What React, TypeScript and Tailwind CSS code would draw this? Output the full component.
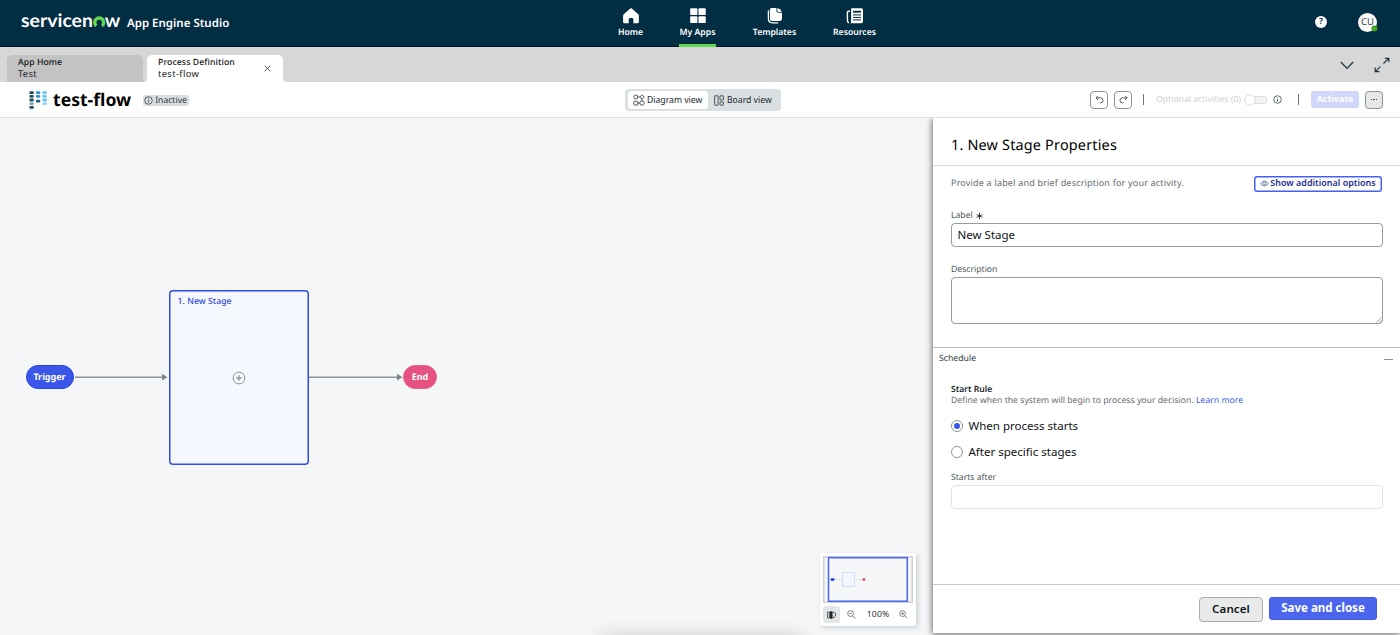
import { useState } from "react";

const NAV = [
  { id: "home", label: "Home", width: "w-[25px]" },
  { id: "apps", label: "My Apps", width: "w-[37px]" },
  { id: "templates", label: "Templates", width: "w-[45px]" },
  { id: "resources", label: "Resources", width: "w-[43px]" },
];

// Column, row and colour of every bar in the process icon
const PROCESS_DOTS: [number, number, string][] = [
  [0, 0, "#1d4a5f"],
  [0, 1, "#1d4a5f"],
  [0, 2, "#1d4a5f"],
  [0, 3, "#8fa3ad"],
  [0, 4, "#1d4a5f"],
  [1, 0, "#2f8fd8"],
  [1, 1, "#2f8fd8"],
  [1, 2.3, "#1f5c7d"],
  [2, 0, "#63c3fb"],
  [2, 1, "#63c3fb"],
  [2, 2, "#63c3fb"],
  [2, 3, "#8fd2fb"],
];

function NavIcon({ id }: { id: string }) {
  return (
    <svg width="18" height="16" viewBox="0 0 18 16" fill="#fff" className="shrink-0">
      {id === "home" && (
        <path d="M8.2.6q.8-.6 1.600 0l6.200 5.300q.9.800.9 1.800v6.200q0 1.400-1.400 1.400h-4.100v-3.700q0-1.500-1.300-1.500H8q-1.300 0-1.300 1.500v3.700H2.500q-1.400 0-1.400-1.400V7.700q0-1 .9-1.800z" />
      )}
      {id === "apps" && (
        <>
          <rect x="1.2" y=".3" width="7.2" height="6.8" rx=".9" />
          <rect x="9.5" y=".3" width="7.2" height="6.8" rx=".9" />
          <rect x="1.2" y="8.3" width="7.2" height="6.8" rx=".9" />
          <rect x="9.5" y="8.3" width="7.2" height="6.8" rx=".9" />
        </>
      )}
      {id === "templates" && (
        <>
          <path d="M5.500 0h4.900v2.800q0 1.900 1.900 1.900h3.700v5.600q0 2.800-2.800 2.800H6.500q-2.600 0-2.600-2.600V1.600Q3.900 0 5.500 0z" />
          <path d="M11.300 0q2.900.8 4.500 3.900h-3.400q-1.100 0-1.100-1.100z" />
          <path d="M2.400 3v7.800q0 4 4 4h5.400" fill="none" stroke="#fff" strokeWidth="1.3" strokeLinecap="round" />
        </>
      )}
      {id === "resources" && (
        <>
          <path d="M5.600.3h9.800q1.600 0 1.600 1.600v11.700q0 1.700-1.600 1.700H3.900q1.200-.3 1.200-1.800V.9q0-.6.5-.6z" />
          <path d="M4 3.200H2.500q-1.100 0-1.100 1.100v8.300q0 1.800 1.500 2.100" fill="none" stroke="#fff" strokeWidth="1.4" />
          <path d="M7 3.700h8" stroke="#032d42" strokeWidth="1.9" />
          <path d="M7 6.900h8M7 9.400h8M7 11.900h8" stroke="#032d42" strokeWidth="1" />
        </>
      )}
    </svg>
  );
}

function InfoIcon({ size }: { size: number }) {
  return (
    <svg width={size} height={size} viewBox="0 0 10 10" fill="none" stroke="#3f4a50" strokeWidth=".9" className="shrink-0">
      <circle cx="5" cy="5" r="4.2" />
      <path d="M5 4.400v3M5 2.500v1" />
    </svg>
  );
}

function TopBar() {
  return (
    <header className="flex h-[47px] shrink-0 border-b border-[#021524] bg-[#032d42] text-white">
      <div className="flex w-[618px] items-start pl-[19px]">
        <svg width="104" height="30" viewBox="-2 -5 104 30" className="mt-[6px]">
          <text x="0" y="16.2" fill="#fff" fontFamily="Lato" fontWeight="700" fontSize="18.5" textLength="72" lengthAdjust="spacingAndGlyphs">
            servicen
          </text>
          <path d="M75.300 14.900A4.500 4.500 0 1 1 81.100 14.900" fill="none" stroke="#62d84e" strokeWidth="3.4" />
          <text x="83.8" y="16.2" fill="#fff" fontFamily="Lato" fontWeight="700" fontSize="18.5" textLength="15.5" lengthAdjust="spacingAndGlyphs">
            w
          </text>
        </svg>
        <span className="ml-[4px] mt-[15px] whitespace-nowrap text-[11.5px] leading-[18px] font-semibold">App Engine Studio</span>
      </div>
      <nav className="flex gap-[36px]">
        {NAV.map(item => (
          <a key={item.id} className={`${item.width} flex h-[47px] flex-col items-center pt-[8px] ${item.id === "apps" ? "border-b-[3px] border-[#62d84e]" : ""}`}>
            <NavIcon id={item.id} />
            <span className="mt-[3px] whitespace-nowrap text-[8.64px] leading-[11px] font-semibold">{item.label}</span>
          </a>
        ))}
      </nav>
      <div className="ml-auto flex items-start gap-[31px] pr-[23px]">
        <span className="mt-[16px] flex size-[12px] items-center justify-center rounded-full bg-white text-[8.5px] leading-none font-semibold text-[#032d42]">?</span>
        <span className="relative mt-[13px] flex size-[19px] items-center justify-center rounded-full bg-[#f8f9f9] pb-px text-[9.5px] leading-none text-[#3c464c]">
          CU
          <svg width="7" height="7" viewBox="0 0 7 7" className="absolute -right-px bottom-0">
            <circle cx="3.5" cy="3.5" r="3" fill="#3a9d16" />
            <path d="m2.200 3.600 1 .9 1.600-1.800" fill="none" stroke="#9be07c" strokeWidth=".7" />
          </svg>
        </span>
      </div>
    </header>
  );
}

function TabStrip() {
  return (
    <div className="flex h-[35px] shrink-0 items-end bg-[#d7d7d7] pl-[7px] text-[8.64px] leading-[12px]">
      <div className="flex h-[27px] w-[136px] flex-col rounded-t-[5px] bg-[#c3c3c3] pt-px pl-[11px]">
        <span className="tracking-[0.08px] font-medium text-[#101416]">App Home</span>
        <span className="text-[9.4px] tracking-[0.3px] text-[#20272b]">Test</span>
      </div>
      <svg width="4" height="27" viewBox="0 0 4 27">
        <path d="M0 22v5h4q-4 0-4-5z" fill="#c3c3c3" />
        <path d="M4 23v4H0q4 0 4-4z" fill="#fff" />
      </svg>
      <div className="flex h-[27px] w-[136px] rounded-t-[5px] bg-white pl-[11px]">
        <div className="flex flex-col pt-px">
          <span className="tracking-[0.13px] font-medium text-[#101416]">Process Definition</span>
          <span className="text-[9.4px] tracking-[0.35px] text-[#20272b]">test-flow</span>
        </div>
        <svg width="7" height="7" viewBox="0 0 7 7" className="mt-[10px] mr-[12px] ml-auto" stroke="#3f4a50" strokeWidth=".9">
          <path d="m.7.7 5.600 5.600M6.300.7.7 6.300" />
        </svg>
      </div>
      <svg width="4" height="27" viewBox="0 0 4 27">
        <path d="M0 23v4h4q-4 0-4-4z" fill="#fff" />
      </svg>
      <div className="ml-auto flex h-full items-center gap-[20px] pr-[10px]">
        <svg width="14" height="9" viewBox="0 0 14 9" fill="none" stroke="#20343f" strokeWidth="1.2" className="mt-px">
          <path d="m.8 1 6.200 6.300L13.200 1" />
        </svg>
        <svg width="16" height="16" viewBox="0 0 16 16" fill="none" stroke="#20343f" strokeWidth="1.2">
          <path d="M9.500 6.500 14.700 1.300M10.800 1.300h4v4M6.300 9.700l-5 5M5.300 14.700H1.200v-4.100" />
        </svg>
      </div>
    </div>
  );
}

function Toolbar() {
  const [view, setView] = useState("diagram");
  return (
    <div className="grid h-[36px] shrink-0 grid-cols-[625px_156px_1fr] border-b border-[#dadfe1] bg-white">
      <div className="flex items-center pl-[29px]">
        <svg width="18" height="18" viewBox="0 0 18 18">
          {PROCESS_DOTS.map(([col, row, fill]) => (
            <rect key={`${col}-${row}`} x={0.4 + col * 6.5} y={0.2 + row * 3.7} width="4.4" height="2.8" rx="1.1" fill={fill} />
          ))}
        </svg>
        <h1 className="mt-px ml-[6px] text-[17.6px] leading-[24px] font-bold text-black">test-flow</h1>
        <span className="mt-[2px] ml-[12px] flex h-[11px] w-[46px] items-center gap-[2px] rounded-[2px] bg-[#dadddf] pl-[1px] text-[8.64px] leading-[11px] text-[#2e373c]">
          <InfoIcon size={9} />
          Inactive
        </span>
      </div>
      <div className="mt-[7px] flex h-[22px] rounded-[4px] bg-[#dadfe2] px-[3px] py-[2px] text-[8.64px] text-[#20272b]">
        <button
          onClick={() => setView("diagram")}
          className={`flex h-[18px] w-[80px] items-center gap-[2px] whitespace-nowrap rounded-[3px] pl-[5px] ${view === "diagram" ? "bg-white" : ""}`}
        >
          <svg width="12" height="12" viewBox="0 0 12 12" fill="none" stroke="#3f4a50" strokeWidth=".9" className="shrink-0">
            <circle cx="2.8" cy="3" r="2" />
            <path d="m9 .8 2.200 2.200L9 5.200 6.800 3z" />
            <rect x=".8" y="7.3" width="4" height="3.7" rx=".6" />
            <circle cx="9" cy="9" r="2.2" />
            <path d="M4.800 3h2M9 5.200v1.600M4.800 9h2" />
          </svg>
          Diagram view
        </button>
        <button
          onClick={() => setView("board")}
          className={`flex h-[18px] w-[70px] items-center gap-[3px] whitespace-nowrap rounded-[3px] pl-[6px] ${view === "board" ? "bg-white" : ""}`}
        >
          <svg width="10" height="11" viewBox="0 0 10 11" fill="none" stroke="#3f4a50" strokeWidth=".9" className="shrink-0">
            <rect x=".6" y=".8" width="3.5" height="9.4" rx=".4" />
            <rect x="6" y=".8" width="3.4" height="4.2" rx=".4" />
            <rect x="6" y="7" width="3.4" height="3.2" rx=".4" />
          </svg>
          Board view
        </button>
      </div>
      <div className="flex items-center pr-[17px]">
        <button className="ml-auto flex size-[18px] items-center justify-center rounded-[4px] border border-[#8b9599]">
          <svg width="9" height="9" viewBox="0 0 9 9" fill="none" stroke="#3f4a50" strokeWidth=".9">
            <path d="M3 .8.9 2.900 3 5M1 2.900h4.600a2.400 2.400 0 0 1 0 4.900H4.500" />
          </svg>
        </button>
        <button className="ml-[6px] flex size-[18px] items-center justify-center rounded-[4px] border border-[#8b9599]">
          <svg width="9" height="9" viewBox="0 0 9 9" fill="none" stroke="#3f4a50" strokeWidth=".9">
            <path d="M6 .8 8.100 2.900 6 5M8 2.900H3.400a2.400 2.400 0 0 0 0 4.900h1.100" />
          </svg>
        </button>
        <span className="ml-[11px] h-[11px] w-px bg-[#6a757a]" />
        <span className="ml-[12px] w-[88px] whitespace-nowrap text-[8.64px] text-[#cdd1d3]">Optional activities (0)</span>
        <svg width="24" height="12" viewBox="0 0 24 12">
          <rect x="2" y="2.5" width="21" height="7" rx="3.5" fill="#f1f2f3" stroke="#dadddf" />
          <circle cx="6" cy="6" r="5.2" fill="#fff" stroke="#dadddf" />
        </svg>
        <span className="ml-[5px]">
          <InfoIcon size={9} />
        </span>
        <span className="ml-[16px] h-[11px] w-px bg-[#6a757a]" />
        <button className="ml-[12px] flex h-[17px] w-[48px] items-center justify-center rounded-[3px] bg-[#d1d7fb] text-[8.8px] font-bold text-white">Activate</button>
        <button className="ml-[6px] flex size-[18px] items-center justify-center gap-[1px] rounded-[4px] border border-[#8b9599] bg-[#e6e8e9]">
          <span className="size-[1.5px] bg-[#3f4a50]" />
          <span className="size-[1.5px] bg-[#3f4a50]" />
          <span className="size-[1.5px] bg-[#3f4a50]" />
        </button>
      </div>
    </div>
  );
}

function MiniMap() {
  return (
    <div className="absolute top-[435px] left-[820px] flex h-[73px] w-[96px] flex-col rounded-[3px] bg-white px-[3px] pt-[3px] shadow-[2px_2px_5px_rgba(60,80,90,0.22)]">
      <svg width="90" height="47" viewBox="0 0 90 47">
        <rect x=".75" y=".75" width="88.5" height="45.5" fill="#f5f6f8" stroke="#cbd0d3" strokeWidth="1.5" />
        <rect x="5.5" y="1.7" width="78.8" height="43.5" fill="none" stroke="#4a66ee" strokeWidth="1.5" />
        <path d="M12 23.500h28" stroke="#dfe2e5" />
        <rect x="19.5" y="16.5" width="12" height="14" fill="#f2f6ff" stroke="#d5dcfa" />
        <rect x="7.5" y="22.3" width="4" height="2.4" rx="1" fill="#1b39e8" />
        <rect x="39.5" y="22.3" width="2.8" height="2.4" rx="1" fill="#e63764" />
      </svg>
      <div className="flex items-center pt-[3px] text-[8.64px] text-[#2e373c]">
        <span className="flex size-[17px] items-center justify-center rounded-[3px] bg-[#e4e5e6]">
          <svg width="9" height="8" viewBox="0 0 9 8">
            <path d="M.6 1h2v6h-2zM6 1.500h1.600l.8.7v3L7 6.500H6" fill="none" stroke="#3f4a50" strokeWidth=".9" />
            <path d="M3 .3h2.600v7.400H3z" fill="#20272b" />
          </svg>
        </span>
        <svg width="9" height="9" viewBox="0 0 9 9" fill="none" stroke="#596368" strokeWidth=".8" className="ml-[7px]">
          <circle cx="3.6" cy="3.6" r="2.9" />
          <path d="m5.700 5.700 2.800 2.800M2.300 3.600h2.600" />
        </svg>
        <span className="w-[43px] pl-px text-center tracking-[0.1px]">100%</span>
        <svg width="9" height="9" viewBox="0 0 9 9" fill="none" stroke="#596368" strokeWidth=".8">
          <circle cx="3.6" cy="3.6" r="2.9" />
          <path d="m5.700 5.700 2.800 2.800M2.300 3.600h2.600M3.600 2.300v2.600" />
        </svg>
      </div>
    </div>
  );
}

function Canvas() {
  return (
    <main className="relative w-[933px] shrink-0 overflow-hidden bg-[#f5f6f8]">
      {/* Connectors */}
      <svg width="450" height="20" viewBox="0 0 450 20" className="absolute top-[249px] left-0">
        <path d="M75 10.200h87M308 10.200h90" stroke="#8b9599" strokeWidth="1.6" />
        <path d="m162 6.800 5.500 3.400-5.500 3.400zM397 6.800l5.500 3.400-5.500 3.400z" fill="#7c878c" />
      </svg>
      <div className="absolute top-[247px] left-[25.5px] flex h-[24px] w-[48px] items-center justify-center rounded-full border border-[#2545ec] bg-[#3b57e9] text-[9px] font-bold text-white">
        Trigger
      </div>
      <div className="absolute top-[172px] left-[169px] flex h-[175px] w-[139.5px] flex-col rounded-[4px] bg-[#f5f9ff] ring-[1.5px] ring-[#2f4de0] ring-inset">
        <span className="pt-[5px] pl-[8.5px] text-[8.64px] leading-[12px] tracking-[0.05px] font-medium text-[#2f4ae0]">1. New Stage</span>
        <svg width="14" height="14" viewBox="0 0 14 14" fill="none" stroke="#8b9599" className="mt-[64px] self-center">
          <circle cx="7" cy="7" r="5.9" />
          <path d="M4.300 7h5.400M7 4.300v5.400" strokeWidth="1.3" />
        </svg>
      </div>
      <div className="absolute top-[247px] left-[403px] flex h-[24px] w-[34px] items-center justify-center rounded-full border border-[#e8648f] bg-[#e35280] text-[9px] font-bold text-white">
        End
      </div>
      <MiniMap />
      <div className="absolute top-[523px] left-[602px] h-[20px] w-[200px] shadow-[0_0_22px_rgba(0,0,0,0.3)]" />
    </main>
  );
}

function PropertiesPanel() {
  const [rule, setRule] = useState("When process starts");
  return (
    <aside className="relative mb-[2px] flex grow flex-col bg-white shadow-[-1px_1px_6px_rgba(0,0,0,0.55)]">
      <h2 className="h-[48px] shrink-0 border-b border-[#dadddf] pt-[18px] pl-[18px] text-[14.4px] leading-[20px] tracking-[0.2px] text-black">
        1. New Stage Properties
      </h2>
      <div className="flex h-[181px] shrink-0 flex-col pr-[17px] pl-[18px]">
        <div className="flex items-start justify-between pt-[10px]">
          <p className="text-[9px] leading-[14px] tracking-[0.19px] text-[#5f6c72]">Provide a label and brief description for your activity.</p>
          <button className="mr-[1px] flex h-[16px] w-[128px] items-center justify-center gap-[1px] whitespace-nowrap rounded-[3px] pb-[2px] text-[8.9px] tracking-[0.05px] font-semibold text-[#1b2c8f] ring-[1.5px] ring-[#4560ef] ring-inset">
            <svg width="9" height="7" viewBox="0 0 9 7" fill="none" stroke="#4a5b9c" strokeWidth=".8" className="mt-px">
              <path d="M.6 3.500Q4.500-1.400 8.400 3.500 4.500 8.400.6 3.500z" />
              <circle cx="4.5" cy="3.5" r="1.2" />
            </svg>
            Show additional options
          </button>
        </div>
        <label className="mt-[17px] flex items-center gap-[3px] text-[8.64px] leading-[12px] text-[#4b565b]">
          Label
          <svg width="7" height="8" viewBox="0 0 7 8" stroke="#20272b" strokeWidth=".9" className="mt-[1px]">
            <path d="M3.500.7v6.600M.6 2.600l5.800 2.800M6.400 2.600.6 5.400" />
          </svg>
        </label>
        <input
          defaultValue="New Stage"
          className="mt-[2px] h-[24px] shrink-0 rounded-[4px] border border-[#929b9f] bg-white px-[5.5px] pb-[2px] text-[11.52px] text-[#101416] outline-none"
        />
        <label className="mt-[16px] text-[8.64px] leading-[12px] text-[#4b565b]">Description</label>
        <div className="relative mt-[2px] flex h-[47px] shrink-0">
          <textarea className="h-full w-full resize-none rounded-[4px] border border-[#929b9f] bg-white outline-none" />
          <svg width="6" height="6" viewBox="0 0 6 6" stroke="#7c878c" strokeWidth=".7" className="absolute right-[1px] bottom-[1px]">
            <path d="M.3 5.700 5.700.3M3 5.700 5.700 3" />
          </svg>
        </div>
      </div>
      <section className="flex grow flex-col border-t border-[#b9bec1] text-[8.64px] leading-[12px]">
        <div className="flex items-center justify-between pt-[4px] pr-[7px] pl-[6px] tracking-[0.05px] text-[#2e373c]">
          Schedule
          <span className="mt-[3px] h-px w-[9px] bg-[#8b9599]" />
        </div>
        <div className="flex flex-col pt-[19px] pr-[17px] pl-[18px]">
          <h3 className="font-semibold text-[#20272b]">Start Rule</h3>
          <p className="leading-[11px] tracking-[0.024px] text-[#5f6c72]">
            Define when the system will begin to process your decision. <a className="text-[#3b57e9]">Learn more</a>
          </p>
          <div className="mt-[12px] flex flex-col gap-[10px]">
            {["When process starts", "After specific stages"].map(option => (
              <button key={option} onClick={() => setRule(option)} className="flex h-[16px] items-center gap-[5.5px] text-[11.52px] text-[#101416]">
                <span className="flex size-[12px] items-center justify-center rounded-full border border-[#8b9599]">
                  {rule === option && <span className="size-[6px] rounded-full bg-[#3b57e9]" />}
                </span>
                {option}
              </button>
            ))}
          </div>
          <label className="mt-[11px] text-[#4b565b]">Starts after</label>
          <input disabled className="mt-[2px] h-[24px] rounded-[4px] border border-[#e2e4e5] bg-white" />
        </div>
      </section>
      <footer className="flex h-[49px] shrink-0 justify-end gap-[6px] border-t border-[#c3c7c9] pt-[12px] pr-[23px] text-[11.52px] font-semibold">
        <button className="h-[25px] w-[64px] rounded-[4px] border border-[#a5adb0] bg-[#e9ebeb] pb-[2px] leading-[20px] tracking-[0.1px] text-[#101416]">Cancel</button>
        <button className="h-[23px] w-[108px] rounded-[3px] border border-[#3f5bee] bg-[#4b66ec] pb-[2px] leading-[19px] font-bold text-white">Save and close</button>
      </footer>
    </aside>
  );
}

export default function App() {
  return (
    <div className="flex h-[635px] w-[1400px] flex-col overflow-hidden bg-[#e8eaeb] font-['Noto_Sans',sans-serif] [text-rendering:geometricPrecision]">
      <TopBar />
      <TabStrip />
      <Toolbar />
      <div className="flex grow overflow-hidden">
        <Canvas />
        <PropertiesPanel />
      </div>
    </div>
  );
}
